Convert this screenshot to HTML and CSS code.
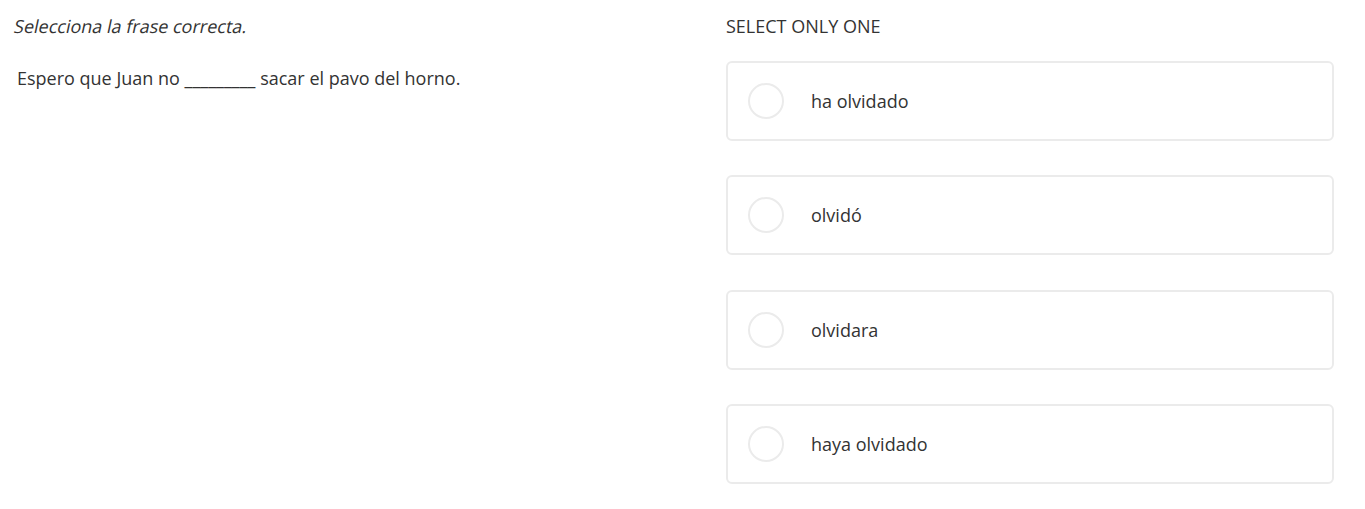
FILE: index.html
```html
<!DOCTYPE html>
<html lang="es">
<head>
<meta charset="utf-8">
<title>Selecciona la frase correcta</title>
<link rel="stylesheet" href="styles.css">
</head>
<body>
<main class="question">
  <section class="prompt">
    <p class="instruction"><span class="oblique">Selecciona la frase correcta.</span></p>
    <p class="sentence">Espero que Juan no _________ sacar el pavo del horno.</p>
  </section>
  <section class="answers">
    <p class="label">SELECT ONLY ONE</p>
    <ul class="options">
      <li class="option"><span class="radio"></span><span class="option-text">ha olvidado</span></li>
      <li class="option"><span class="radio"></span><span class="option-text">olvidó</span></li>
      <li class="option"><span class="radio"></span><span class="option-text">olvidara</span></li>
      <li class="option"><span class="radio"></span><span class="option-text">haya olvidado</span></li>
    </ul>
  </section>
</main>
</body>
</html>
```
FILE: styles.css
```css
html, body {
  margin: 0;
  padding: 0;
  background: #ffffff;
}
body {
  font-family: "Open Sans", "Liberation Sans", sans-serif;
  font-size: 18px;
  line-height: 24px;
  color: #333333;
}
.question {
  display: grid;
  grid-template-columns: 713px 608px;
  padding: 14px 31px 0 13px;
}
.prompt p, .answers p {
  margin: 0;
}
.oblique {
  display: inline-block;
  transform: skewX(-12deg);
  transform-origin: 0 80%;
}
.sentence {
  margin-top: 28px !important;
  padding-left: 4px;
}
.label {
  text-transform: uppercase;
}
.options {
  list-style: none;
  margin: 23px 0 0;
  padding: 0;
  display: flex;
  flex-direction: column;
  gap: 34.33px;
}
.option {
  display: flex;
  align-items: center;
  height: 80px;
  box-sizing: border-box;
  border: 2px solid #ebebeb;
  border-radius: 6px;
  padding-left: 20px;
}
.radio {
  width: 36px;
  height: 36px;
  box-sizing: border-box;
  border: 2px solid #ebebeb;
  border-radius: 50%;
  flex: none;
}
.option-text {
  margin-left: 27px;
}
```
